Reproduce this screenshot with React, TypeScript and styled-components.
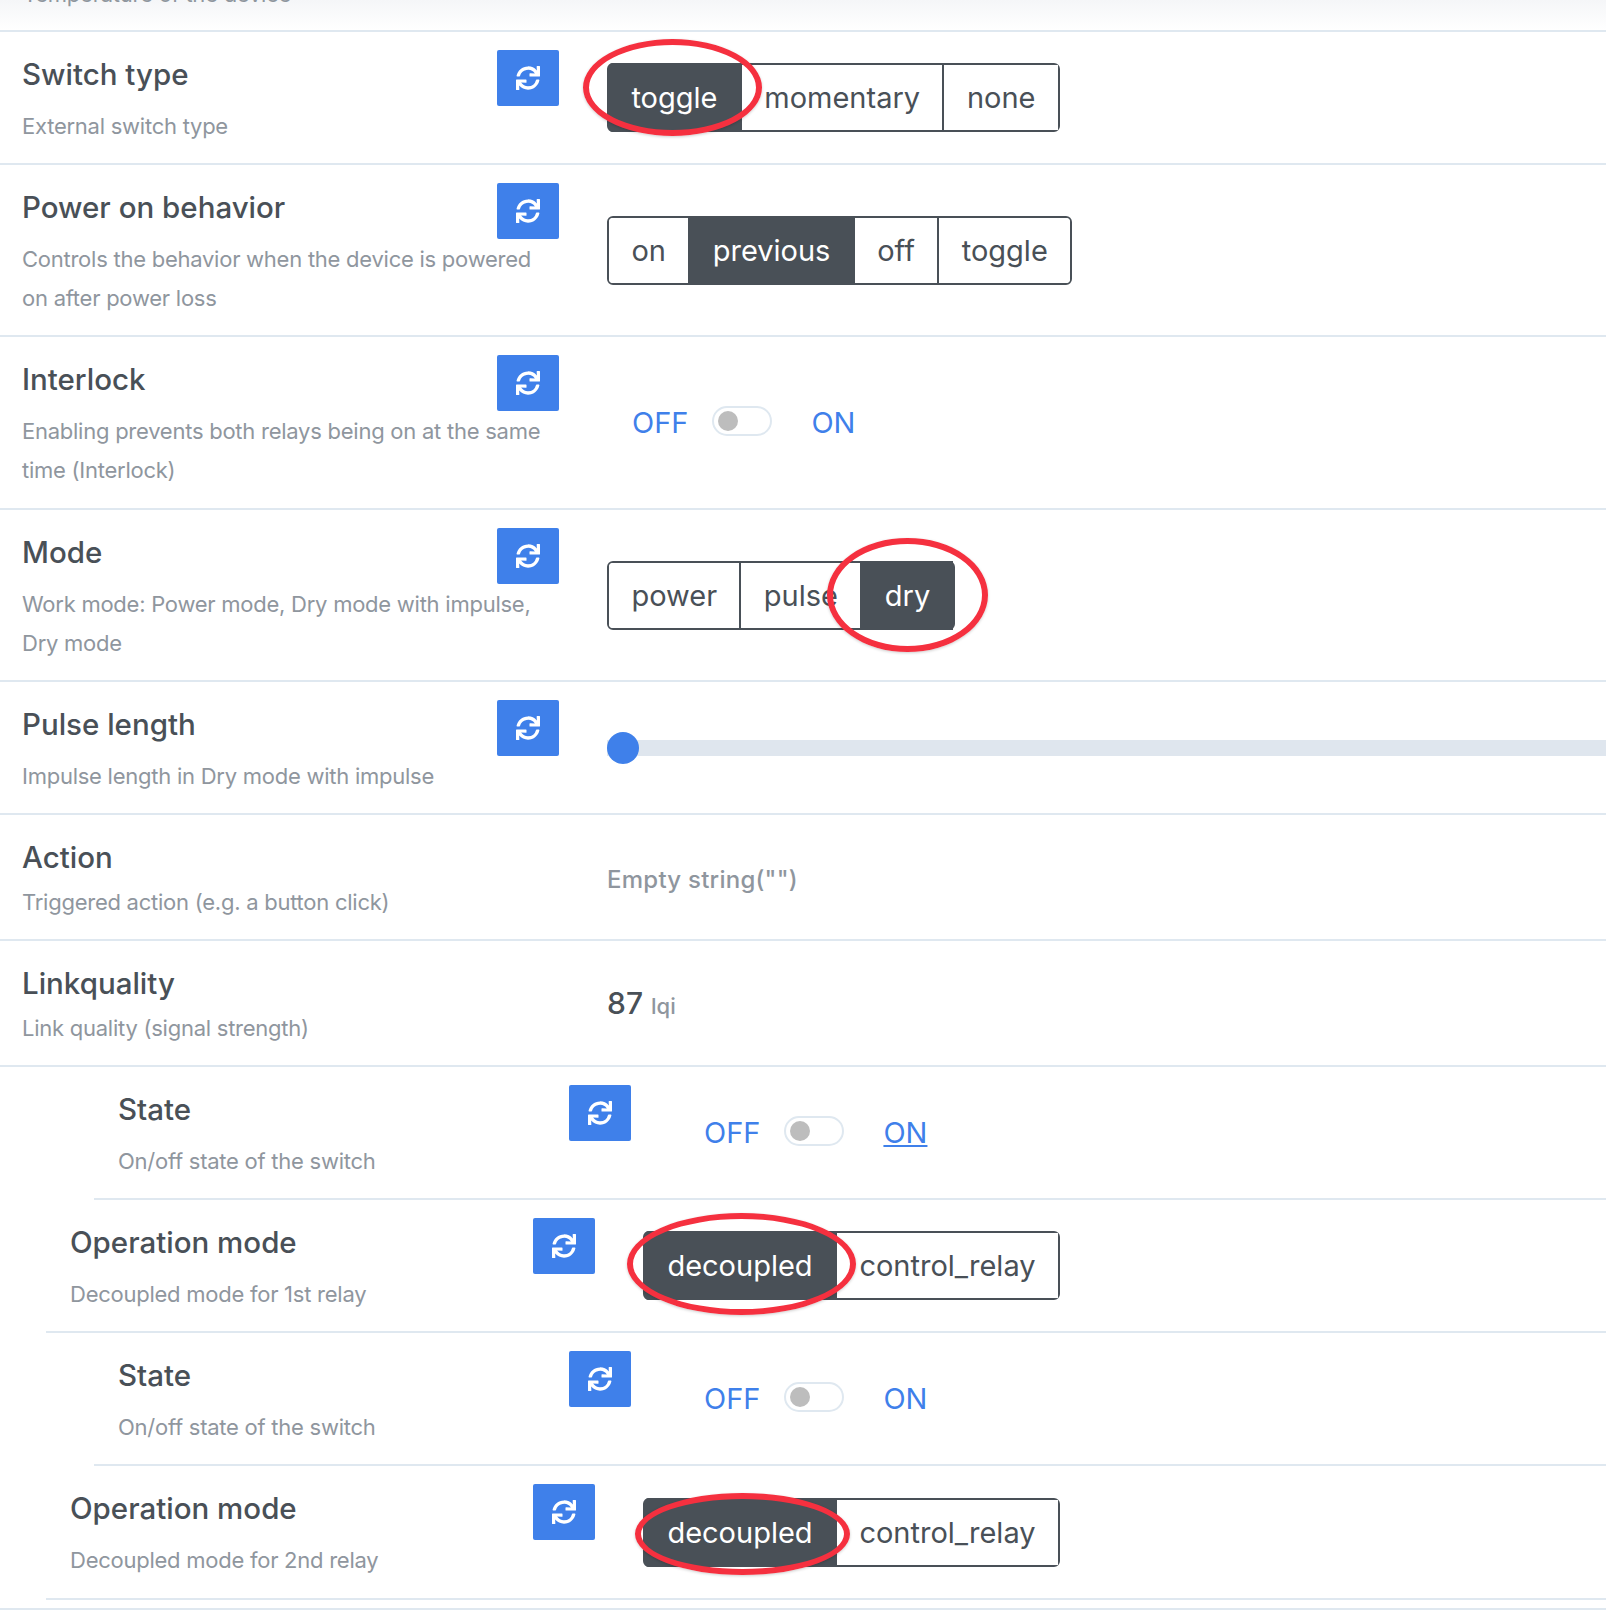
import React from 'react'
import styled, { createGlobalStyle } from 'styled-components'
import { FaSync } from 'react-icons/fa'

type Mark = { left: number; top: number; width: number; height: number }

type Control =
  | { kind: 'enum'; options: string[]; active: string; mark?: Mark }
  | { kind: 'toggle'; link?: boolean }
  | { kind: 'slider' }
  | { kind: 'empty' }
  | { kind: 'number'; value: string; unit: string }

type Feature = {
  title: string
  lines: string[]
  refresh: boolean
  indent: number
  labelWidth: number
  height: number
  control: Control
}

const features: Feature[] = [
  {
    title: 'Switch type',
    lines: ['External switch type'],
    refresh: true,
    indent: 0,
    labelWidth: 607,
    height: 133,
    control: {
      kind: 'enum',
      options: ['toggle', 'momentary', 'none'],
      active: 'toggle',
      mark: { left: -26, top: -26, width: 179, height: 97 },
    },
  },
  {
    title: 'Power on behavior',
    lines: ['Controls the behavior when the device is powered', 'on after power loss'],
    refresh: true,
    indent: 0,
    labelWidth: 607,
    height: 172,
    control: { kind: 'enum', options: ['on', 'previous', 'off', 'toggle'], active: 'previous' },
  },
  {
    title: 'Interlock',
    lines: ['Enabling prevents both relays being on at the same', 'time (Interlock)'],
    refresh: true,
    indent: 0,
    labelWidth: 607,
    height: 173,
    control: { kind: 'toggle' },
  },
  {
    title: 'Mode',
    lines: ['Work mode: Power mode, Dry mode with impulse,', 'Dry mode'],
    refresh: true,
    indent: 0,
    labelWidth: 607,
    height: 172,
    control: {
      kind: 'enum',
      options: ['power', 'pulse', 'dry'],
      active: 'dry',
      mark: { left: 218, top: -25, width: 161, height: 114 },
    },
  },
  {
    title: 'Pulse length',
    lines: ['Impulse length in Dry mode with impulse'],
    refresh: true,
    indent: 0,
    labelWidth: 607,
    height: 133,
    control: { kind: 'slider' },
  },
  {
    title: 'Action',
    lines: ['Triggered action (e.g. a button click)'],
    refresh: false,
    indent: 0,
    labelWidth: 607,
    height: 126,
    control: { kind: 'empty' },
  },
  {
    title: 'Linkquality',
    lines: ['Link quality (signal strength)'],
    refresh: false,
    indent: 0,
    labelWidth: 607,
    height: 126,
    control: { kind: 'number', value: '87', unit: 'lqi' },
  },
  {
    title: 'State',
    lines: ['On/off state of the switch'],
    refresh: true,
    indent: 94,
    labelWidth: 585,
    height: 133,
    control: { kind: 'toggle', link: true },
  },
  {
    title: 'Operation mode',
    lines: ['Decoupled mode for 1st relay'],
    refresh: true,
    indent: 46,
    labelWidth: 597,
    height: 133,
    control: {
      kind: 'enum',
      options: ['decoupled', 'control_relay'],
      active: 'decoupled',
      mark: { left: -18, top: -20, width: 229, height: 102 },
    },
  },
  {
    title: 'State',
    lines: ['On/off state of the switch'],
    refresh: true,
    indent: 94,
    labelWidth: 585,
    height: 133,
    control: { kind: 'toggle' },
  },
  {
    title: 'Operation mode',
    lines: ['Decoupled mode for 2nd relay'],
    refresh: true,
    indent: 46,
    labelWidth: 597,
    height: 134,
    control: {
      kind: 'enum',
      options: ['decoupled', 'control_relay'],
      active: 'decoupled',
      mark: { left: -10, top: -7, width: 215, height: 82 },
    },
  },
]

const GlobalStyle = createGlobalStyle`
  html, body {
    margin: 0;
    padding: 0;
    background: #fff;
    overflow: hidden;
  }
  body {
    font-family: Inter, "Noto Sans", sans-serif;
    color: #495057;
  }
`

const Page = styled.div`
  width: 1606px;
  height: 1618px;
  overflow: hidden;
`

const TopStrip = styled.div`
  height: 30px;
  background: linear-gradient(#f5f6f8, #ffffff);
  border-bottom: 2px solid #dfe8f0;
  overflow: hidden;
  padding-left: 23px;
`

const ClippedLine = styled.div`
  margin-top: -25px;
  font-size: 22px;
  letter-spacing: -0.25px;
  line-height: 39px;
  color: #8f969e;
`

const Row = styled.div<{ $indent: number; $height: number }>`
  display: flex;
  box-sizing: border-box;
  margin-left: ${(p) => p.$indent}px;
  height: ${(p) => p.$height}px;
  border-bottom: 2px solid #dfe8f0;
`

const LabelCell = styled.div<{ $width: number; $nested: boolean }>`
  flex: none;
  box-sizing: border-box;
  width: ${(p) => p.$width}px;
  padding: 18px 48px 0 ${(p) => (p.$nested ? 24 : 22)}px;
  white-space: nowrap;
`

const TitleRow = styled.div`
  display: flex;
  justify-content: space-between;
  align-items: flex-start;
`

const Title = styled.div`
  font-size: 29.5px;
  font-weight: 500;
  line-height: 49px;
  color: #495057;
`

const Description = styled.div`
  font-size: 22px;
  letter-spacing: -0.25px;
  line-height: 39px;
  color: #8f969e;
  &:nth-child(2) {
    margin-top: 1px;
  }
`

const RefreshButton = styled.button`
  all: unset;
  display: flex;
  flex: none;
  align-items: center;
  justify-content: center;
  width: 62px;
  height: 56px;
  background: #3f80ea;
  color: #fff;
  border-radius: 2px;
  font-size: 24px;
`

const ControlCell = styled.div`
  flex: 1;
  min-width: 0;
  display: flex;
  align-items: center;
`

const EnumGroup = styled.div`
  position: relative;
  display: inline-flex;
  height: 69px;
  box-sizing: border-box;
  border: 2px solid #495057;
  border-radius: 6px;
`

const EnumOption = styled.div<{ $active: boolean }>`
  display: flex;
  align-items: center;
  padding: 0 22.4px;
  font-size: 29px;
  margin: ${(p) => (p.$active ? '-2px 0' : '0')};
  background: ${(p) => (p.$active ? '#495057' : '#fff')};
  color: ${(p) => (p.$active ? '#fff' : '#495057')};
  &:not(:first-child) {
    border-left: 2px solid #495057;
  }
  &:first-child {
    border-radius: 4px 0 0 4px;
  }
  &:last-child {
    border-radius: 0 4px 4px 0;
  }
`

const RedMark = styled.div`
  position: absolute;
  box-sizing: border-box;
  border: 6px solid #f5303f;
  border-radius: 50%;
  box-shadow: 0 1px 3px rgba(0, 0, 0, 0.2);
  pointer-events: none;
`

const ToggleWrap = styled.div`
  display: flex;
  align-items: center;
  padding-left: 25px;
  height: 100%;
`

const ToggleLabel = styled.span<{ $link?: boolean }>`
  font-size: 29px;
  color: #3f80ea;
  text-decoration: ${(p) => (p.$link ? 'underline' : 'none')};
`

const SwitchTrack = styled.div`
  display: flex;
  align-items: center;
  box-sizing: border-box;
  width: 60px;
  height: 30px;
  margin: -4px 39px 0 24px;
  padding-left: 4px;
  border: 2px solid #dfe8f0;
  border-radius: 15px;
`

const SwitchKnob = styled.div`
  width: 20px;
  height: 20px;
  border-radius: 50%;
  background: #bdbdbd;
`

const SliderTrack = styled.div`
  flex: 1;
  height: 16px;
  background: #dfe6ee;
  display: flex;
  align-items: center;
`

const SliderThumb = styled.div`
  width: 32px;
  height: 32px;
  border-radius: 50%;
  background: #3f80ea;
`

const EmptyValue = styled.span`
  font-size: 24px;
  font-weight: 500;
  letter-spacing: 0.25px;
  margin-top: 4px;
  color: #8f969e;
`

const NumberValue = styled.span`
  font-size: 30px;
  font-weight: 500;
  color: #495057;
`

const Unit = styled.span`
  font-size: 22px;
  margin-left: 8px;
  color: #8f969e;
`

const FullLine = styled.div`
  margin-top: 8px;
  border-top: 2px solid #dfe8f0;
`

const FeatureControl = ({ control }: { control: Control }) => {
  switch (control.kind) {
    case 'enum':
      return (
        <EnumGroup>
          {control.options.map((option) => (
            <EnumOption key={option} $active={option === control.active}>
              {option}
            </EnumOption>
          ))}
          {control.mark && (
            <RedMark
              style={{
                left: control.mark.left,
                top: control.mark.top,
                width: control.mark.width,
                height: control.mark.height,
              }}
            />
          )}
        </EnumGroup>
      )
    case 'toggle':
      return (
        <ToggleWrap>
          <ToggleLabel>OFF</ToggleLabel>
          <SwitchTrack>
            <SwitchKnob />
          </SwitchTrack>
          <ToggleLabel $link={control.link}>ON</ToggleLabel>
        </ToggleWrap>
      )
    case 'slider':
      return (
        <SliderTrack>
          <SliderThumb />
        </SliderTrack>
      )
    case 'empty':
      return <EmptyValue>Empty string("")</EmptyValue>
    case 'number':
      return (
        <NumberValue>
          {control.value}
          <Unit>{control.unit}</Unit>
        </NumberValue>
      )
  }
}

export default function App() {
  return (
    <Page>
      <GlobalStyle />
      <TopStrip>
        <ClippedLine>Temperature of the device</ClippedLine>
      </TopStrip>
      {features.map((feature, index) => (
        <Row key={index} $indent={feature.indent} $height={feature.height}>
          <LabelCell $width={feature.labelWidth} $nested={feature.indent > 0}>
            <TitleRow>
              <Title>{feature.title}</Title>
              {feature.refresh && (
                <RefreshButton>
                  <FaSync />
                </RefreshButton>
              )}
            </TitleRow>
            {feature.lines.map((line) => (
              <Description key={line}>{line}</Description>
            ))}
          </LabelCell>
          <ControlCell>
            <FeatureControl control={feature.control} />
          </ControlCell>
        </Row>
      ))}
      <FullLine />
    </Page>
  )
}
